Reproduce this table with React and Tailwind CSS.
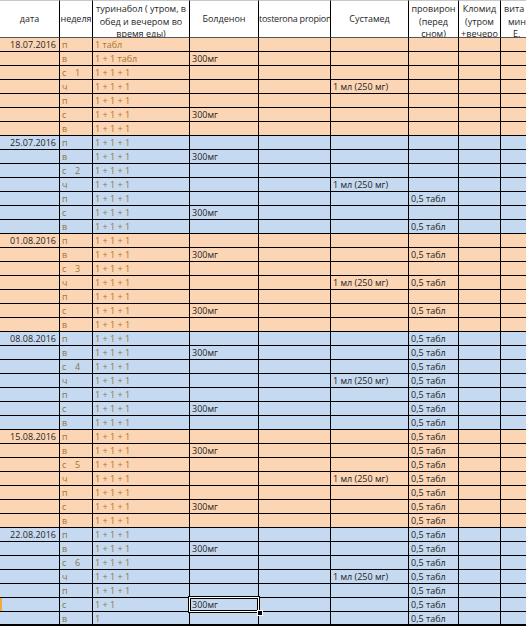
import React from "react";

const weeks = [
  {
    date: "18.07.2016",
    tone: "orange",
    rows: [
      ["п", "1 табл", "", "", ""],
      ["в", "1 + 1 табл", "300мг", "", ""],
      ["с", "1 + 1 + 1", "", "", ""],
      ["ч", "1 + 1 + 1", "", "1 мл (250 мг)", ""],
      ["п", "1 + 1 + 1", "", "", ""],
      ["с", "1 + 1 + 1", "300мг", "", ""],
      ["в", "1 + 1 + 1", "", "", ""],
    ],
  },
  {
    date: "25.07.2016",
    tone: "blue",
    rows: [
      ["п", "1 + 1 + 1", "", "", ""],
      ["в", "1 + 1 + 1", "300мг", "", ""],
      ["с", "1 + 1 + 1", "", "", ""],
      ["ч", "1 + 1 + 1", "", "1 мл (250 мг)", ""],
      ["п", "1 + 1 + 1", "", "", "0,5 табл"],
      ["с", "1 + 1 + 1", "300мг", "", ""],
      ["в", "1 + 1 + 1", "", "", "0,5 табл"],
    ],
  },
  {
    date: "01.08.2016",
    tone: "orange",
    rows: [
      ["п", "1 + 1 + 1", "", "", ""],
      ["в", "1 + 1 + 1", "300мг", "", "0,5 табл"],
      ["с", "1 + 1 + 1", "", "", ""],
      ["ч", "1 + 1 + 1", "", "1 мл (250 мг)", "0,5 табл"],
      ["п", "1 + 1 + 1", "", "", ""],
      ["с", "1 + 1 + 1", "300мг", "", "0,5 табл"],
      ["в", "1 + 1 + 1", "", "", ""],
    ],
  },
  {
    date: "08.08.2016",
    tone: "blue",
    rows: [
      ["п", "1 + 1 + 1", "", "", "0,5 табл"],
      ["в", "1 + 1 + 1", "300мг", "", "0,5 табл"],
      ["с", "1 + 1 + 1", "", "", "0,5 табл"],
      ["ч", "1 + 1 + 1", "", "1 мл (250 мг)", "0,5 табл"],
      ["п", "1 + 1 + 1", "", "", "0,5 табл"],
      ["с", "1 + 1 + 1", "300мг", "", "0,5 табл"],
      ["в", "1 + 1 + 1", "", "", "0,5 табл"],
    ],
  },
  {
    date: "15.08.2016",
    tone: "orange",
    rows: [
      ["п", "1 + 1 + 1", "", "", "0,5 табл"],
      ["в", "1 + 1 + 1", "300мг", "", "0,5 табл"],
      ["с", "1 + 1 + 1", "", "", "0,5 табл"],
      ["ч", "1 + 1 + 1", "", "1 мл (250 мг)", "0,5 табл"],
      ["п", "1 + 1 + 1", "", "", "0,5 табл"],
      ["с", "1 + 1 + 1", "300мг", "", "0,5 табл"],
      ["в", "1 + 1 + 1", "", "", "0,5 табл"],
    ],
  },
  {
    date: "22.08.2016",
    tone: "blue",
    rows: [
      ["п", "1 + 1 + 1", "", "", "0,5 табл"],
      ["в", "1 + 1 + 1", "300мг", "", "0,5 табл"],
      ["с", "1 + 1 + 1", "", "", "0,5 табл"],
      ["ч", "1 + 1 + 1", "", "1 мл (250 мг)", "0,5 табл"],
      ["п", "1 + 1 + 1", "", "", "0,5 табл"],
      ["с", "1 + 1", "300мг", "", "0,5 табл"],
      ["в", "1", "", "", "0,5 табл"],
    ],
  },
];

const cols = "grid grid-cols-[60px_33px_97px_69px_72px_78px_50px_42px_30px]";
const headBase =
  "border-t border-t-[#c8c8c8] border-r border-r-black border-b border-b-[#555] h-[38px] overflow-hidden whitespace-nowrap text-[#262626]";

function HeadCell({ lines, top }) {
  return (
    <div
      className={`${headBase} flex flex-col items-center leading-[12.5px] ${
        top ? "justify-start pt-[2px]" : "justify-center"
      }`}
    >
      {lines.map((l, i) => (
        <span key={i}>{l}</span>
      ))}
    </div>
  );
}

function Row({ week, weekNo, row, idx, last }) {
  const orange = week.tone === "orange";
  const bg = orange ? "bg-[#fcd5b4]" : "bg-[#c5d9f1]";
  const tan = orange ? "text-[#a9752f]" : "text-[#8c7747]";
  const [day, turin, bold, sust, prov] = row;
  const selected = weekNo === 6 && idx === 5;
  const cell = `border-r border-black h-full flex items-center overflow-hidden whitespace-nowrap ${
    last ? "border-b-2" : "border-b"
  }`;

  return (
    <div className={`${cols} ${bg} h-[14px] leading-none`}>
      <div
        className={`${cell} justify-end pr-[3px] text-[#262626] ${
          selected ? "shadow-[inset_2px_0_0_#f2a93b]" : ""
        }`}
      >
        {idx === 0 ? week.date : ""}
      </div>
      <div className={`${cell} pl-[2px] ${tan}`}>
        <span className="inline-block w-[13px]">{day}</span>
        {idx === 2 && <span>{weekNo}</span>}
      </div>
      <div className={`${cell} pl-[2px] ${tan}`}>{turin}</div>
      <div className={`${cell} pl-[2px] text-[#262626] relative overflow-visible`}>
        {bold}
        {selected && (
          <div className="absolute -inset-[2px] z-10 shadow-[inset_0_0_0_1px_#000,inset_0_0_0_2px_#fff,inset_0_0_0_3px_#000]">
            <div className="absolute -right-[3px] -bottom-[3px] w-[6px] h-[6px] bg-black border border-white" />
          </div>
        )}
      </div>
      <div className={cell}></div>
      <div className={`${cell} pl-[2px] text-[#262626]`}>{sust}</div>
      <div className={`${cell} pl-[2px] text-[#262626]`}>{prov}</div>
      <div className={cell}></div>
      <div className={cell}></div>
    </div>
  );
}

export default function App() {
  return (
    <div className="w-[526px] h-[626px] overflow-hidden bg-white font-['Open_Sans',sans-serif] text-[9px]">
      <div className={cols}>
        <HeadCell lines={["дата"]} />
        <HeadCell lines={["неделя"]} />
        <HeadCell top lines={["туринабол ( утром, в", "обед и вечером во", "время еды)"]} />
        <HeadCell lines={["Болденон"]} />
        <div className={`${headBase} flex items-center tracking-[-0.25px]`}>
          tosterona propion
        </div>
        <HeadCell lines={["Сустамед"]} />
        <HeadCell top lines={["провирон", "(перед", "сном)"]} />
        <HeadCell top lines={["Кломид", "(утром", "+вечеро"]} />
        <div className={`${headBase} flex flex-col items-start pt-[2px] pl-[3px] leading-[12.5px]`}>
          <span>вита</span>
          <span className="pl-[4px]">мин</span>
          <span className="pl-[9px]">Е.</span>
        </div>
      </div>
      {weeks.map((week, w) =>
        week.rows.map((row, i) => (
          <Row
            key={`${w}-${i}`}
            week={week}
            weekNo={w + 1}
            row={row}
            idx={i}
            last={w === weeks.length - 1 && i === 6}
          />
        ))
      )}
    </div>
  );
}
